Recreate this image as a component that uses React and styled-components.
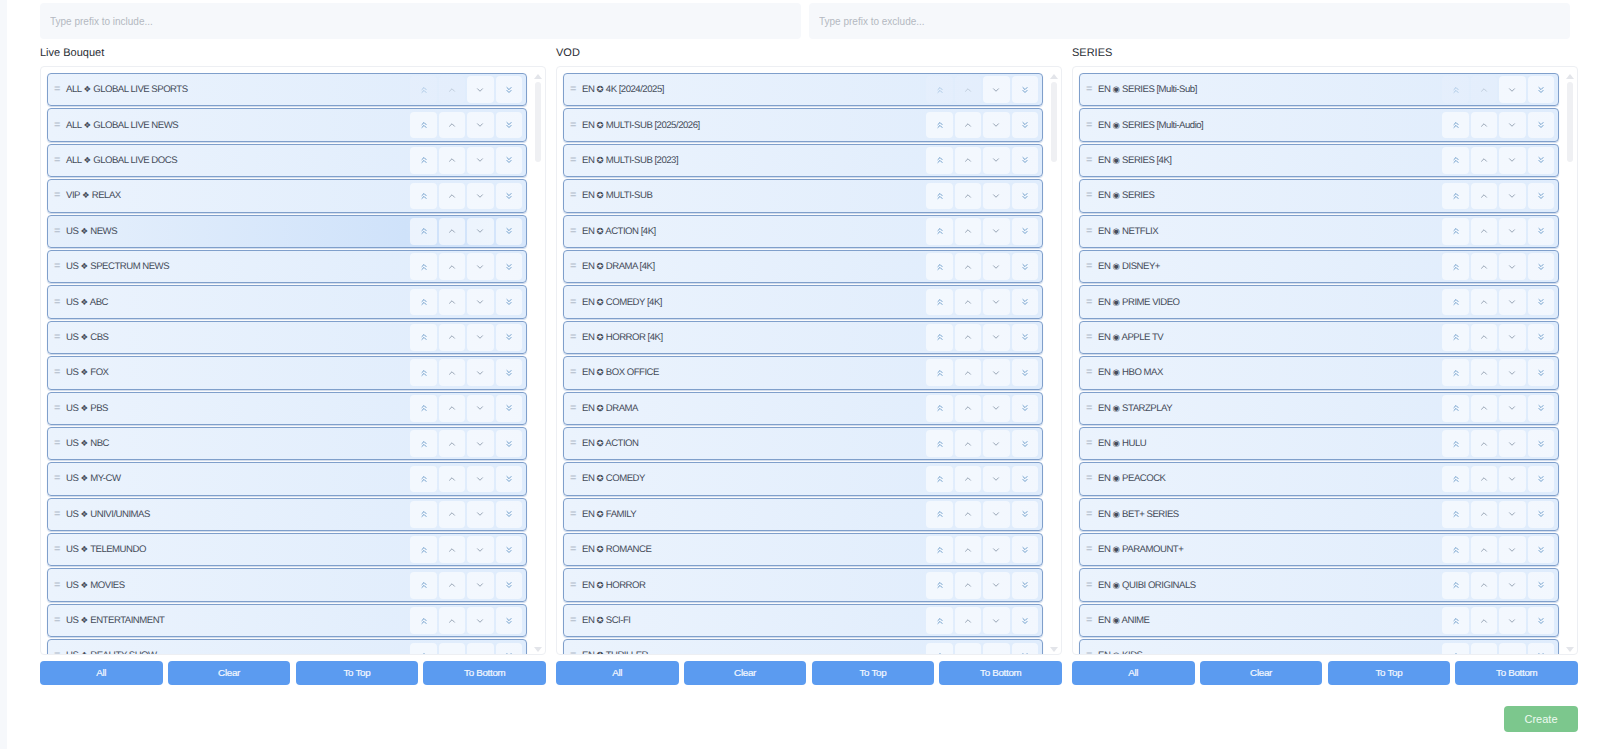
import React from "react";
import styled, { createGlobalStyle } from "styled-components";
import { ChevronsUp, ChevronUp, ChevronDown, ChevronsDown } from "lucide-react";

const GlobalStyle = createGlobalStyle`
  html, body {
    margin: 0;
    height: 100%;
    background: #ffffff;
    overflow: hidden;
    font-family: "Liberation Sans", Arial, sans-serif;
    text-rendering: geometricPrecision;
  }
`;

const Page = styled.div`
  display: flex;
  height: 749px;
`;

const SideStrip = styled.div`
  width: 7px;
  background: #f6f8fb;
  flex-shrink: 0;
`;

const Main = styled.div`
  width: 1538px;
  margin-left: 33px;
  padding-top: 3px;
  display: flex;
  flex-direction: column;
`;

const FilterRow = styled.div`
  display: flex;
  gap: 8px;
  width: 1530px;
`;

const FilterInput = styled.input`
  flex: 1;
  min-width: 0;
  height: 36px;
  box-sizing: border-box;
  padding: 0 10px;
  border: none;
  border-radius: 4px;
  background: #f6f8fb;
  font-family: inherit;
  font-size: 10px;
  outline: none;

  &::placeholder {
    color: #b4b9c1;
  }
`;

const Columns = styled.div`
  display: grid;
  grid-template-columns: repeat(3, 506px);
  gap: 10px;
  margin-top: 6px;
`;

const Column = styled.div`
  display: flex;
  flex-direction: column;
`;

const ColumnTitle = styled.div`
  height: 21px;
  line-height: 16px;
  font-size: 11px;
  color: #2a2e35;
`;

const ListBox = styled.div`
  height: 589px;
  box-sizing: border-box;
  border: 1px solid #edeff3;
  border-radius: 4px;
  padding: 6px 3px 0 6px;
  display: flex;
  justify-content: space-between;
  overflow: hidden;
`;

const RowList = styled.div`
  width: 480px;
  display: flex;
  flex-direction: column;
  gap: 2px;
`;

const Row = styled.div`
  flex-shrink: 0;
  height: 33.4px;
  box-sizing: border-box;
  display: flex;
  align-items: center;
  padding: 0 3.7px 0 6px;
  border: 1px solid #7f9fcb;
  border-radius: 4px;
  background: ${(props) =>
    props.$active
      ? "linear-gradient(90deg, #e6f0fc 0%, #cfe2fa 75%, #d6e6fb 100%)"
      : "linear-gradient(90deg, #ebf3fd 0%, #dfecfc 100%)"};
  box-shadow: 0 1px 1px rgba(90, 130, 190, 0.3);
`;

const Handle = styled.span`
  width: 12px;
  font-size: 11px;
  line-height: 1;
  color: #b3bdcb;
`;

const RowLabel = styled.span`
  flex: 1;
  font-size: 9.6px;
  letter-spacing: -0.5px;
  color: #454c5a;
  white-space: nowrap;
`;

const Glyph = styled.span`
  font-family: "DejaVu Sans", sans-serif;
  font-size: 8.5px;
  letter-spacing: 0;
`;

const MoveGroup = styled.div`
  display: flex;
  gap: 1.8px;
`;

const MoveButton = styled.div`
  width: 26.7px;
  height: 26.7px;
  display: flex;
  align-items: center;
  justify-content: center;
  border-radius: 4px;
  background: ${(props) => (props.$disabled ? "rgba(255, 255, 255, 0.25)" : "rgba(255, 255, 255, 0.6)")};
  color: ${(props) => (props.$double ? "#6f9ecb" : "#8594a6")};
  opacity: ${(props) => (props.$disabled ? 0.45 : 1)};
`;

const Scrollbar = styled.div`
  width: 8px;
  display: flex;
  flex-direction: column;
  align-items: center;
  justify-content: space-between;
  height: 582px;
  padding-top: 1px;
  box-sizing: border-box;
`;

const ScrollTop = styled.div`
  display: flex;
  flex-direction: column;
  align-items: center;
  width: 100%;
`;

const ArrowUp = styled.div`
  width: 0;
  height: 0;
  border-left: 4px solid transparent;
  border-right: 4px solid transparent;
  border-bottom: 5px solid #e3e5ea;
`;

const ArrowDown = styled(ArrowUp)`
  border-bottom: none;
  border-top: 5px solid #e3e5ea;
  margin-bottom: 3px;
`;

const Thumb = styled.div`
  width: 6px;
  height: 80px;
  margin-top: 3px;
  border-radius: 3px;
  background: #eff0f3;
`;

const ActionRow = styled.div`
  display: grid;
  grid-template-columns: repeat(4, 1fr);
  gap: 5.3px;
  margin-top: 5.7px;
`;

const ActionButton = styled.button`
  height: 24.3px;
  padding: 0;
  border: none;
  border-radius: 4px;
  background: #5b9bf0;
  color: #f4f8ff;
  font-family: inherit;
  font-size: 9.8px;
  letter-spacing: -0.3px;
  -webkit-text-stroke: 0.2px #f4f8ff;
`;

const Footer = styled.div`
  display: flex;
  justify-content: flex-end;
  margin-top: 21px;
`;

const CreateButton = styled.button`
  width: 74px;
  height: 26px;
  padding: 0;
  border: none;
  border-radius: 4px;
  background: #7cc78d;
  color: #eefaf0;
  font-family: inherit;
  font-size: 11px;
`;

const columns = [
  {
    title: "Live Bouquet",
    glyph: "❖",
    activeRow: 4,
    rows: [
      "ALL|GLOBAL LIVE SPORTS", "ALL|GLOBAL LIVE NEWS", "ALL|GLOBAL LIVE DOCS", "VIP|RELAX", "US|NEWS",
      "US|SPECTRUM NEWS", "US|ABC", "US|CBS", "US|FOX", "US|PBS", "US|NBC", "US|MY-CW", "US|UNIVI/UNIMAS",
      "US|TELEMUNDO", "US|MOVIES", "US|ENTERTAINMENT", "US|REALITY SHOW",
    ],
  },
  {
    title: "VOD",
    glyph: "✪",
    rows: [
      "EN|4K [2024/2025]", "EN|MULTI-SUB [2025/2026]", "EN|MULTI-SUB [2023]", "EN|MULTI-SUB", "EN|ACTION [4K]",
      "EN|DRAMA [4K]", "EN|COMEDY [4K]", "EN|HORROR [4K]", "EN|BOX OFFICE", "EN|DRAMA", "EN|ACTION", "EN|COMEDY",
      "EN|FAMILY", "EN|ROMANCE", "EN|HORROR", "EN|SCI-FI", "EN|THRILLER",
    ],
  },
  {
    title: "SERIES",
    glyph: "◉",
    rows: [
      "EN|SERIES [Multi-Sub]", "EN|SERIES [Multi-Audio]", "EN|SERIES [4K]", "EN|SERIES", "EN|NETFLIX", "EN|DISNEY+",
      "EN|PRIME VIDEO", "EN|APPLE TV", "EN|HBO MAX", "EN|STARZPLAY", "EN|HULU", "EN|PEACOCK", "EN|BET+ SERIES",
      "EN|PARAMOUNT+", "EN|QUIBI ORIGINALS", "EN|ANIME", "EN|KIDS",
    ],
  },
];

const ListRow = ({ text, glyph, first, active }) => {
  const [prefix, name] = text.split("|");

  return (
    <Row $active={active}>
      <Handle>=</Handle>
      <RowLabel>
        {prefix} <Glyph>{glyph}</Glyph> {name}
      </RowLabel>
      <MoveGroup>
        <MoveButton $double $disabled={first}><ChevronsUp size={10} strokeWidth={2.4} /></MoveButton>
        <MoveButton $disabled={first}><ChevronUp size={10} /></MoveButton>
        <MoveButton><ChevronDown size={10} /></MoveButton>
        <MoveButton $double><ChevronsDown size={10} strokeWidth={2.4} /></MoveButton>
      </MoveGroup>
    </Row>
  );
};

const App = () => (
  <Page>
    <GlobalStyle />
    <SideStrip />
    <Main>
      <FilterRow>
        <FilterInput placeholder="Type prefix to include..." />
        <FilterInput placeholder="Type prefix to exclude..." />
      </FilterRow>

      <Columns>
        {columns.map((col) => (
          <Column key={col.title}>
            <ColumnTitle>{col.title}</ColumnTitle>
            <ListBox>
              <RowList>
                {col.rows.map((text, i) => (
                  <ListRow key={text} text={text} glyph={col.glyph} first={i === 0} active={i === col.activeRow} />
                ))}
              </RowList>
              <Scrollbar>
                <ScrollTop>
                  <ArrowUp />
                  <Thumb />
                </ScrollTop>
                <ArrowDown />
              </Scrollbar>
            </ListBox>
            <ActionRow>
              <ActionButton>All</ActionButton>
              <ActionButton>Clear</ActionButton>
              <ActionButton>To Top</ActionButton>
              <ActionButton>To Bottom</ActionButton>
            </ActionRow>
          </Column>
        ))}
      </Columns>

      <Footer>
        <CreateButton>Create</CreateButton>
      </Footer>
    </Main>
  </Page>
);

export default App;
